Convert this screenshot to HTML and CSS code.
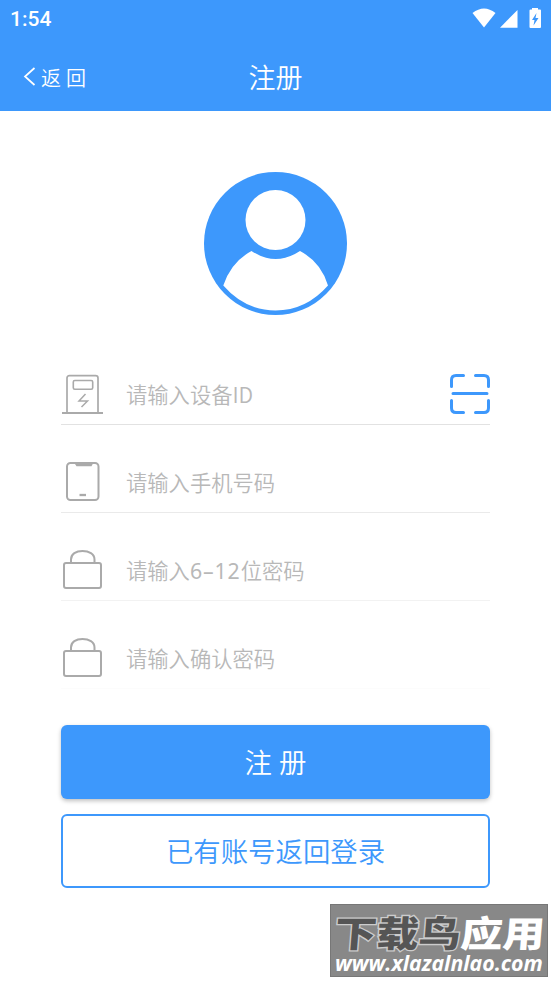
FILE: index.html
```html
<!DOCTYPE html>
<html lang="zh-CN">
<head>
    <meta charset="UTF-8">
    <title>注册</title>
    <link rel="stylesheet" href="styles.css">
</head>
<body>
<header class="header">
    <div class="status-bar">
        <span class="time">1:54</span>
        <svg class="status-icons" width="72" height="24" viewBox="0 0 72 24" fill="#fff">
            <path d="M0.500 7 Q12 -2 23.500 7 L12 21.500 Z"/>
            <path d="M45.500 4 V21.700 H28 Z"/>
            <path fill-rule="evenodd" d="M60 3.500 V2 H66 V3.500 H68 Q69 3.500 69 4.500 V21 Q69 22 68 22 H58.500 Q57.500 22 57.500 21 V4.500 Q57.500 3.500 58.500 3.500 Z M64.500 7 L60 14 H62.500 L61.500 19.500 L66.500 12 H63.500 Z"/>
        </svg>
    </div>
    <div class="nav">
        <a class="back">
            <svg width="13" height="20" viewBox="0 0 13 20"><path d="M11.500 1 L2 9.500 L11.500 18"/></svg>
            <span>返 回</span>
        </a>
        <h1>注册</h1>
    </div>
</header>

<main class="content">
    <svg class="avatar" width="143" height="143" viewBox="0 0 143 143">
        <circle cx="71.500" cy="71.500" r="71.500" fill="#3d98fc"/>
        <circle cx="71.500" cy="48" r="30" fill="#fff"/>
        <path d="M47.500 79 Q71.500 95 96 79 Q117 90 124 113.500 Q102 138.500 71.500 138.500 Q41 138.500 19.300 113.500 Q27 90 47.500 79 Z" fill="#fff"/>
    </svg>

    <form class="form">
        <div class="field device">
            <svg class="icon" width="42" height="42" viewBox="0 0 42 42">
                <path d="M6 39 V5 Q6 2.700 8.500 2.700 H34.500 Q37 2.700 37 5 V39" stroke-width="1.700"/>
                <rect x="12.300" y="7.500" width="19.400" height="8.700" rx="1.500" stroke-width="1.600"/>
                <path d="M24.500 21 L18 28 H26.500 L20.500 34" stroke-width="1.500"/>
                <path d="M1 40 H42" stroke-width="2"/>
            </svg>
            <label class="placeholder">请输入设备ID</label>
            <svg class="scan" width="40" height="40" viewBox="0 0 40 40">
                <path d="M1.500 12.500 V6 Q1.500 1.500 6 1.500 H13.500 M25.500 1.500 H34 Q38.500 1.500 38.500 6 V12.500 M38.500 26.500 V34 Q38.500 38.500 34 38.500 H25.500 M13.500 38.500 H6 Q1.500 38.500 1.500 34 V26.500 M3 19.500 H37"/>
            </svg>
        </div>
        <div class="field phone">
            <svg class="icon" width="42" height="42" viewBox="0 0 42 42">
                <rect x="6" y="2" width="31.500" height="37" rx="3.500" stroke-width="2"/>
                <path d="M13 1.500 H32.500 L30.500 5.300 H15.500 Z" fill="#aaa" stroke="none"/>
                <path d="M18.500 34 H25" stroke-width="2.300"/>
            </svg>
            <label class="placeholder">请输入手机号码</label>
        </div>
        <div class="field password">
            <svg class="icon" width="42" height="42" viewBox="0 0 42 42">
                <rect x="3" y="14" width="37" height="25" rx="2" stroke-width="2"/>
                <path d="M10 13.500 V10.500 C10 5 15 2 21.500 2 S33.500 5 33.500 10.500 V13.500" stroke-width="2"/>
            </svg>
            <label class="placeholder">请输入<span class="digits">6–12</span>位密码</label>
        </div>
        <div class="field confirm">
            <svg class="icon" width="42" height="42" viewBox="0 0 42 42">
                <rect x="3" y="14" width="37" height="25" rx="2" stroke-width="2"/>
                <path d="M10 13.500 V10.500 C10 5 15 2 21.500 2 S33.500 5 33.500 10.500 V13.500" stroke-width="2"/>
            </svg>
            <label class="placeholder">请输入确认密码</label>
        </div>

        <button type="button" class="btn register">注 册</button>
        <button type="button" class="btn login">已有账号返回登录</button>
    </form>
</main>

<div class="watermark">
    <div class="site-name"><span>下载鸟</span>应用</div>
    <div class="site-url">www.xlazalnlao.com</div>
</div>
</body>
</html>
```

FILE: styles.css
```css
* {
    box-sizing: border-box;
}

body {
    margin: 0;
    height: 981px;
    overflow: hidden;
    position: relative;
    background-color: #fff;
    font-family: "Noto Sans CJK SC", sans-serif;
    font-weight: 350;
}

.header {
    height: 111px;
    background-color: #3d98fc;
    color: #fff;
}

.status-bar {
    display: flex;
    justify-content: space-between;
    height: 44px;
    padding: 6px 7px 0 10px;
}

.time {
    font-family: Roboto, sans-serif;
    font-size: 21px;
    font-weight: 500;
    line-height: 27px;
}

.nav {
    display: grid;
    grid-template-columns: 1fr auto 1fr;
    align-items: center;
    height: 66px;
}

.back {
    display: flex;
    align-items: center;
    gap: 5px;
    padding-left: 23px;
    font-size: 20px;
    word-spacing: 0.5px;
}

.back svg {
    fill: none;
    stroke: #fff;
    stroke-width: 1.7;
}

.nav h1 {
    margin: 0;
    padding-bottom: 2px;
    font-size: 27px;
    font-weight: 350;
}

.content {
    padding: 61px 61px 0;
}

.avatar {
    display: block;
    margin: 0 auto;
}

.form {
    margin-top: 22px;
}

.field {
    display: flex;
    align-items: flex-end;
    height: 88px;
    padding-bottom: 9px;
    border-bottom: 1px solid #e2e2e2;
}

.phone {
    border-color: #eaeaea;
}

.password {
    border-color: #f2f2f2;
}

.confirm {
    border-color: #fcfcfc;
}

.icon {
    fill: none;
    stroke: #aaa;
}

.placeholder {
    flex: 1;
    margin-left: 23px;
    height: 40px;
    line-height: 37px;
    font-size: 21.3px;
    color: #b8b8b8;
}

.digits {
    font-family: "Noto Sans", sans-serif;
    font-weight: 400;
    letter-spacing: 0.9px;
}

.scan {
    margin-bottom: 1px;
    fill: none;
    stroke: #3d98fc;
    stroke-width: 3;
    stroke-linecap: round;
}

.btn {
    display: block;
    width: 100%;
    height: 74px;
    padding: 0 0 3px;
    border: none;
    border-radius: 6px;
    font-family: inherit;
    font-size: 27.4px;
    font-weight: 350;
}

.register {
    margin-top: 36px;
    background-color: #3d98fc;
    color: #fff;
    word-spacing: 1px;
    box-shadow: 0 2px 4px rgba(0, 0, 0, 0.25);
}

.login {
    margin-top: 15px;
    border: 2px solid #3d98fc;
    background-color: #fff;
    color: #3d98fc;
}

/* lies over the corner of the page */
.watermark {
    position: absolute;
    left: 330px;
    top: 904px;
    width: 218px;
    height: 73px;
    padding: 7px 0 0 4px;
    border: 1px solid #777;
    background-color: #888;
    color: #fff;
    white-space: nowrap;
}

.site-name {
    height: 40px;
    line-height: 40px;
    font-size: 42px;
    font-weight: 900;
    transform: scaleY(0.86) skewX(-4deg);
}

.site-name span {
    color: #555;
    -webkit-text-stroke: 3px #ccc;
    paint-order: stroke fill;
}

.site-url {
    font-family: "Open Sans", sans-serif;
    font-size: 21.3px;
    font-style: italic;
    font-weight: 700;
    line-height: 22px;
}
```
